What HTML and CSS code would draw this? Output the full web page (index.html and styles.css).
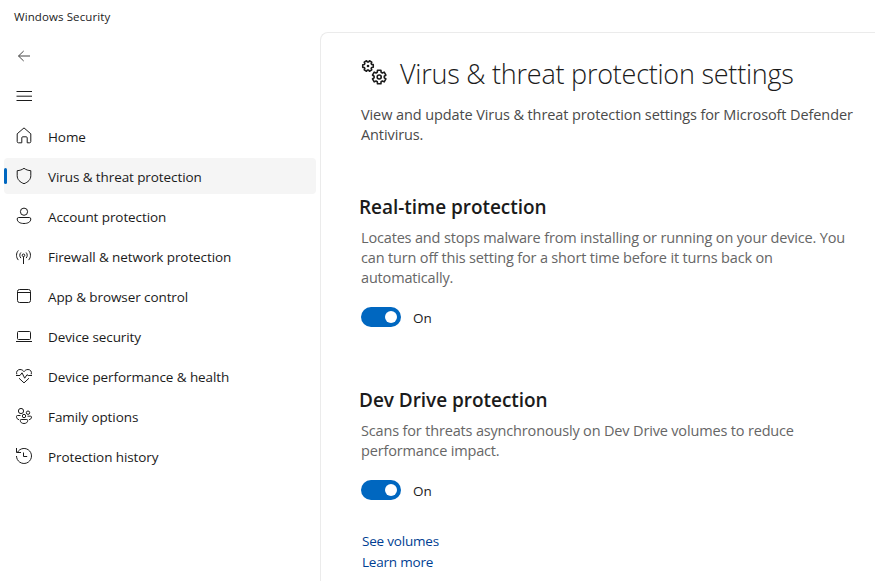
FILE: index.html
```
<!DOCTYPE html>
<html lang="en">
<head>
<meta charset="UTF-8">
<meta name="viewport" content="width=device-width, initial-scale=1.0">
<title>Windows Security</title>
<link rel="stylesheet" href="styles.css">
</head>
<body>

<header class="titlebar">Windows Security</header>

<div class="window">
  <nav class="sidebar">
    <button class="nav-button" aria-label="Back">
      <svg class="icon muted" viewBox="0 0 20 20"><path d="M16 10H4.500M9.700 5L4.500 10l5.200 5"/></svg>
    </button>
    <button class="nav-button" aria-label="Menu">
      <svg class="icon" viewBox="0 0 20 20"><path d="M2.500 5.500h15.500M2.500 10.200h15.500M2.500 14.500h15.500"/></svg>
    </button>

    <a class="nav-item">
      <svg class="icon" viewBox="0 0 20 20"><path d="M3.200 7.800L10 1.900l6.800 5.900v7.700q0 1.300-1.300 1.300h-2.300v-5q0-1-1-1H8.800q-1 0-1 1v5H4.500q-1.300 0-1.300-1.300z"/></svg>
      <span>Home</span>
    </a>
    <a class="nav-item active">
      <svg class="icon" viewBox="0 0 20 20"><path d="M10 2.300c2 1.500 4.200 2.200 6.800 2.400v5c0 3.800-2.600 6.400-6.800 8-4.200-1.600-6.800-4.200-6.800-8v-5C5.800 4.500 8 3.800 10 2.300z"/></svg>
      <span>Virus &amp; threat protection</span>
    </a>
    <a class="nav-item">
      <svg class="icon" viewBox="0 0 20 20"><circle cx="10" cy="5.700" r="3.600"/><path d="M4.700 11.500h10.600q1.500 0 1.500 1.500c0 3-3 4.500-6.800 4.500S3.200 16 3.200 13q0-1.500 1.500-1.500z"/></svg>
      <span>Account protection</span>
    </a>
    <a class="nav-item">
      <svg class="icon" viewBox="0 0 20 20"><circle cx="9.500" cy="9.300" r="1.300"/><path d="M9.500 10.600V18M6.900 6.500c-1.500 1.500-1.500 4 0 5.600M12.100 6.500c1.500 1.500 1.500 4 0 5.600M4.400 4.500c-2.500 2.600-2.500 7 0 9.600M14.600 4.500c2.500 2.600 2.500 7 0 9.600"/></svg>
      <span>Firewall &amp; network protection</span>
    </a>
    <a class="nav-item">
      <svg class="icon" viewBox="0 0 20 20"><rect x="3.500" y="3.500" width="13" height="13" rx="2"/><path d="M3.500 6.500h13"/></svg>
      <span>App &amp; browser control</span>
    </a>
    <a class="nav-item">
      <svg class="icon" viewBox="0 0 20 20"><rect x="3.500" y="5.500" width="13" height="8" rx="1"/><path d="M2 15.500h16"/></svg>
      <span>Device security</span>
    </a>
    <a class="nav-item">
      <svg class="icon" viewBox="0 0 20 20"><path d="M2.800 8.300C1.900 5.700 3.500 3.500 6 3.500c1.800 0 3 .8 4 2.200 1-1.400 2.200-2.200 4-2.200 2.500 0 4.100 2.200 3.200 4.800M2 9.500h4l2-2.700 2.700 5.400 2.300-3.500 1.200.8H18M5 12.200l5 4.700 5-4.700"/></svg>
      <span>Device performance &amp; health</span>
    </a>
    <a class="nav-item">
      <svg class="icon" viewBox="0 0 20 20"><circle cx="7" cy="5" r="2.600"/><circle cx="14" cy="6.700" r="1.700"/><circle cx="10" cy="10" r="1.700"/><path d="M6.500 9.500H3.500q-1 0-1 1c0 1.900 1 2.900 2.600 3.200M13.500 10.200h3q1 0 1 .9c0 1.400-1 2.400-2.600 2.600M7.200 13.500h5.600q.9 0 .9.900c0 2.100-1.600 3.100-3.700 3.100s-3.700-1-3.700-3.100q0-.9.900-.9z"/></svg>
      <span>Family options</span>
    </a>
    <a class="nav-item">
      <svg class="icon" viewBox="0 0 20 20"><path d="M2.500 2v4.500H7M3.350 6.500A7.500 7.500 0 1 1 2.500 10M9.500 6.500v4h3.700"/></svg>
      <span>Protection history</span>
    </a>
  </nav>

  <main class="content">
    <div class="page-title">
      <svg class="gears" viewBox="0 0 26 26">
        <defs>
          <path id="gear" d="M-1.700-6.800H1.700L1.900-4.800 3.200-4.050 5-4.900 6.700-1.900 5.100-.75V.75L6.700 1.900 5 4.900 3.200 4.050 1.900 4.800 1.700 6.800H-1.700L-1.900 4.800-3.200 4.050-5 4.900-6.700 1.900-5.100.75V-.75L-6.700-1.900-5-4.900-3.200-4.050-1.900-4.800z"/>
        </defs>
        <use class="small" href="#gear" transform="translate(7 7) rotate(30) scale(.78)"/>
        <circle class="dot" cx="7" cy="7" r="1.300"/>
        <use href="#gear" transform="translate(18.200 18)"/>
        <circle cx="18.200" cy="18" r="2"/>
      </svg>
      <h1>Virus &amp; threat protection settings</h1>
    </div>
    <p class="intro">View and update Virus &amp; threat protection settings for Microsoft Defender<br>Antivirus.</p>

    <section class="setting">
      <h2>Real-time protection</h2>
      <p>Locates and stops malware from installing or running on your device. You<br>can turn off this setting for a short time before it turns back on<br>automatically.</p>
      <div class="toggle-row">
        <span class="toggle"></span>
        <span class="state">On</span>
      </div>
    </section>

    <section class="setting">
      <h2>Dev Drive protection</h2>
      <p>Scans for threats asynchronously on Dev Drive volumes to reduce<br>performance impact.</p>
      <div class="toggle-row">
        <span class="toggle"></span>
        <span class="state">On</span>
      </div>
      <div class="links">
        <a>See volumes</a>
        <a>Learn more</a>
      </div>
    </section>
  </main>
</div>

</body>
</html>
```

FILE: styles.css
```
* {
  box-sizing: border-box;
}
body {
  margin: 0;
  height: 581px;
  overflow: hidden;
  background: #fff;
  color: #1b1b1b;
  font-family: "Open Sans", "Noto Sans", sans-serif;
  font-size: 13.5px;
  letter-spacing: -0.09px;
}
h1, h2, p {
  margin: 0;
  white-space: nowrap;
}
.titlebar {
  height: 32px;
  padding: 1px 14px 0;
  font-size: 11.5px;
  line-height: 32px;
  letter-spacing: 0.1px;
}
.window {
  display: flex;
  height: 549px;
}
.sidebar {
  display: flex;
  flex-direction: column;
  gap: 4px;
  width: 320px;
  padding: 6px 4px;
}
.nav-button,
.nav-item {
  display: flex;
  align-items: center;
  flex: none;
  gap: 14px;
  height: 36px;
  padding: 0 10px;
  border: none;
  border-radius: 4px;
  background: none;
  white-space: nowrap;
}
.nav-item span {
  padding-top: 2px;
}
.nav-item.active {
  position: relative;
  background: #f5f5f5;
}
.nav-item.active::before {
  content: "";
  position: absolute;
  left: 0;
  top: 10px;
  width: 3px;
  height: 16px;
  border-radius: 2px;
  background: #0067c0;
}
.icon {
  flex: none;
  width: 20px;
  height: 20px;
  fill: none;
  stroke: #1b1b1b;
  stroke-width: 1;
}
.icon.muted {
  stroke: #444;
}
.content {
  flex: 1;
  padding: 23px 0 0 40px;
  border: 1px solid #ebebeb;
  border-width: 1px 0 0 1px;
  border-top-left-radius: 8px;
}
.page-title {
  display: flex;
  gap: 13px;
  height: 36px;
}
.gears {
  width: 26px;
  height: 26px;
  margin: 3px 0 0;
  fill: none;
  stroke: #1b1b1b;
  stroke-width: 1.6;
  stroke-linejoin: round;
}
.gears .small {
  stroke-width: 2;
}
.gears .dot {
  fill: #1b1b1b;
  stroke: none;
}
h1 {
  font-size: 27px;
  font-weight: 300;
  line-height: 36px;
  letter-spacing: -0.24px;
}
.intro {
  margin-top: 13px;
  color: #4a4a4a;
  font-size: 14.5px;
  line-height: 20px;
  letter-spacing: -0.1px;
}
.setting {
  margin-top: 48px;
}
.setting + .setting {
  margin-top: 59px;
}
.setting h2 {
  margin-left: -2px;
  font-size: 19px;
  font-weight: 600;
  line-height: 28px;
  letter-spacing: -0.04px;
}
.setting p {
  margin-top: 7px;
  color: #666;
  font-size: 14.5px;
  line-height: 20px;
  letter-spacing: -0.165px;
}
.toggle-row {
  display: flex;
  align-items: center;
  gap: 12px;
  height: 20px;
  margin-top: 19px;
}
.toggle-row .state {
  padding-top: 2px;
}
.toggle {
  display: flex;
  justify-content: flex-end;
  align-items: center;
  width: 40px;
  height: 20px;
  padding: 0 4px;
  border-radius: 10px;
  background: #0067c0;
}
.toggle::after {
  content: "";
  width: 12px;
  height: 12px;
  border-radius: 50%;
  background: #fff;
}
.links {
  display: flex;
  flex-direction: column;
  margin: 31px 0 0 1px;
  color: #003e92;
  line-height: 21px;
  letter-spacing: -0.2px;
}
```
